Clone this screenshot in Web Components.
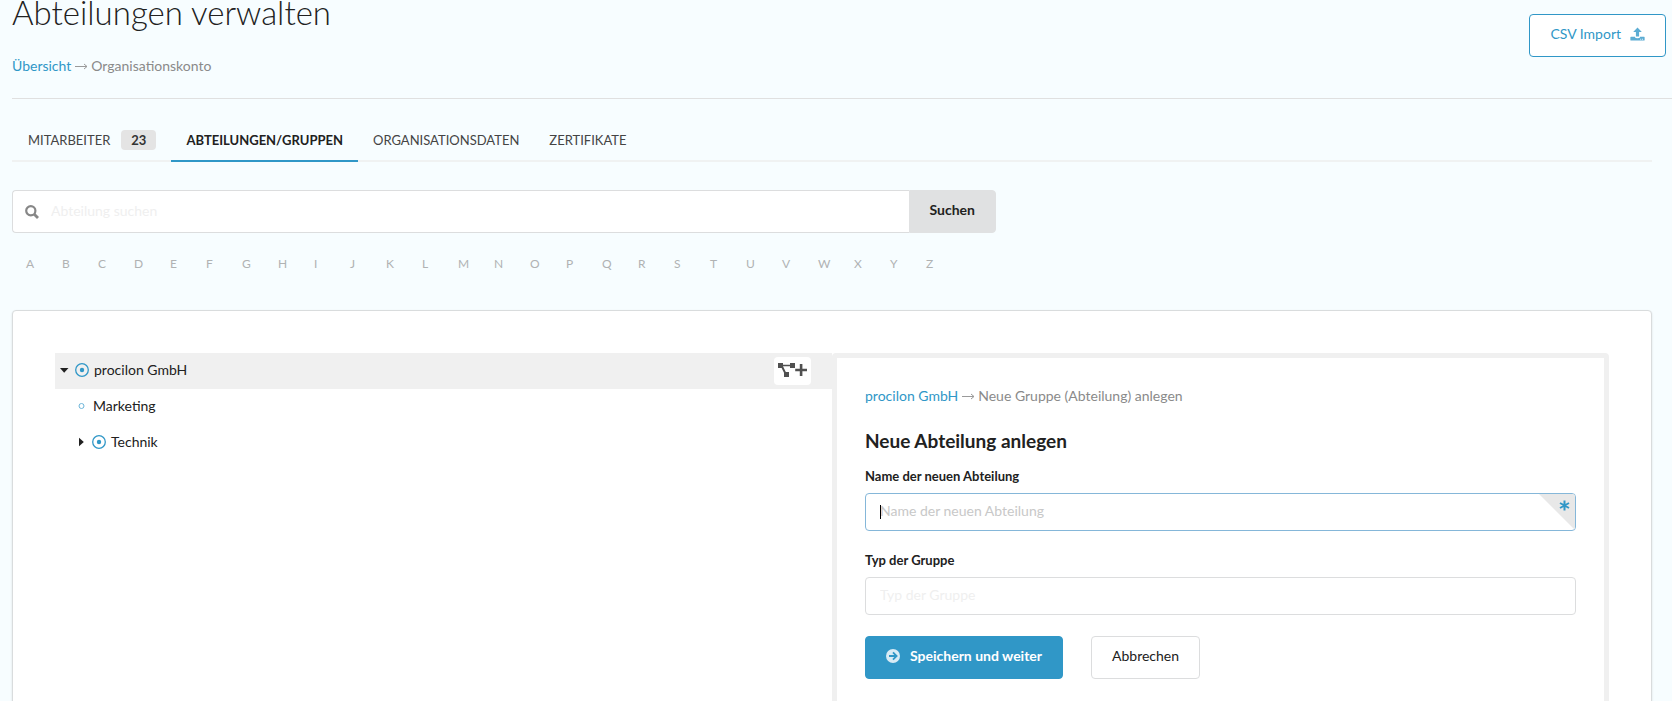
<!DOCTYPE html>
<html lang="de">
<head>
<meta charset="utf-8">
<title>Abteilungen verwalten</title>
<style>
  body {
    margin: 0;
    background: #f7fdff;
    font-family: Lato, "Liberation Sans", sans-serif;
    font-size: 14px;
    line-height: 20px;
    color: #212121;
    --accent: #3097c7;
    --line: #dcddde;
    --soft: #f0f0f0;
  }
</style>
</head>
<body>
<org-page></org-page>

<script>
const define = (name, html, setup) => {
  const template = document.createElement('template');
  template.innerHTML = '<style>*{box-sizing:border-box}a{color:var(--accent);text-decoration:none}button,input{font-family:inherit}</style>' + html;
  customElements.define(name, class extends HTMLElement {
    constructor() {
      super();
      this.attachShadow({ mode: 'open' }).append(template.content.cloneNode(true));
    }
    connectedCallback() { if (setup) setup(this, this.shadowRoot); }
  });
};

define('bread-crumb', `
  <style>
    :host { display: block; color: #8a8a8a; font-size: 14px; line-height: 20px; }
    nav { display: flex; gap: 3px; }
    svg { width: 14px; height: 20px; }
  </style>
  <nav aria-label="Pfad"><a href="#"><slot name="parent"></slot></a>
    <svg viewBox="0 0 14 20" fill="none" stroke="#9a9a9a" aria-hidden="true"><path d="M1 10.5h12M10 8l3 2.5-3 2.5"/></svg>
    <span><slot></slot></span></nav>`);

define('ui-button', `
  <style>
    :host { display: block; }
    button {
      display: flex; align-items: center; justify-content: center; gap: 9px;
      height: 43px; padding: 0 20px 3px; margin: 0;
      background: #fff; border: 1px solid var(--line); border-radius: 4px;
      color: #212121; font-size: 14px; line-height: 20px; white-space: nowrap;
    }
    :host([kind=outline]) button { border-color: var(--accent); color: var(--accent); }
    :host([kind=primary]) button { gap: 10px; background: var(--accent); border-color: var(--accent); color: #fff; font-weight: 700; }
    :host([kind=attached]) button { background: #e0e1e2; border-color: #e0e1e2; border-radius: 0 4px 4px 0; font-weight: 700; }
  </style>
  <button type="button"><slot name="before"></slot><slot></slot><slot name="after"></slot></button>`);

define('page-head', `
  <style>
    :host { display: block; margin-left: 12px; border-bottom: 1px solid #e0e0e0; }
    header { display: flex; justify-content: space-between; align-items: flex-start; padding: 0 6px 22px 0; }
    h1 { margin: 0 0 32px; font-size: 33px; line-height: 24px; font-weight: 300; }
    ui-button { margin-top: 14px; }
    svg { display: block; width: 15px; height: 15px; }
  </style>
  <header>
    <div>
      <h1>Abteilungen verwalten</h1>
      <bread-crumb><span slot="parent">Übersicht</span>Organisationskonto</bread-crumb>
    </div>
    <ui-button kind="outline">CSV Import
      <svg slot="after" viewBox="0 0 16 16" fill="#5cacd3" aria-hidden="true"><path d="M8 0.5l4.6 4.7H9.7v5H6.3v-5H3.4zM1 10.3h4.3v.6q.4 1 2.7 1t2.7-1v-.6H15q.6 0 .6.6v3q0 .6-.6.6H1q-.6 0-.6-.6v-3q0-.6.6-.6zM11 12.6v.9h.9v-.9zm2 0v.9h.9v-.9z" fill-rule="evenodd"/></svg>
    </ui-button>
  </header>`);

define('tab-bar', `
  <style>
    :host { display: block; border-bottom: 2px solid #f0f2f2; }
    nav { display: flex; margin-bottom: -2px; }
  </style>
  <nav><slot></slot></nav>`);

define('tab-item', `
  <style>
    :host { display: block; border-bottom: 2px solid transparent; }
    :host([active]) { border-color: var(--accent); font-weight: 700; }
    a { display: flex; align-items: center; gap: 11px; height: 40px; padding: 0 15px; color: #444; font-size: 13px; text-transform: uppercase; }
    :host([active]) a { color: #212121; }
    ::slotted(b) { padding: 0 10px; background: #e4e4e4; border-radius: 4px; color: #333; }
  </style>
  <a href="#"><slot></slot></a>`);

define('search-bar', `
  <style>
    :host { display: block; width: 60%; }
    form { display: flex; }
    label { flex: 1; display: flex; align-items: center; gap: 12px; height: 43px; padding: 0 12px; background: #fff; border: 1px solid var(--line); border-right: 0; border-radius: 4px 0 0 4px; }
    svg { width: 14px; height: 14px; }
    input { flex: 1; min-width: 0; padding: 0 0 2px; border: 0; outline: 0; background: none; font-size: 14px; }
    input::placeholder { color: #efefef; opacity: 1; }
  </style>
  <form>
    <label><svg viewBox="0 0 14 14" fill="none" stroke="#878787" aria-hidden="true"><circle cx="5.8" cy="5.8" r="4.6" stroke-width="2.2"/><path d="M9 9l4 4" stroke-width="2.8"/></svg>
    <input type="search" aria-label="Abteilung suchen" placeholder="Abteilung suchen"></label>
    <ui-button kind="attached">Suchen</ui-button>
  </form>`);

define('letter-index', `
  <style>
    :host { display: block; padding-left: 14px; }
    nav { display: flex; }
    a { width: 36px; color: #b0b2b3; font-size: 12px; line-height: 20px; }
  </style>
  <nav aria-label="Buchstaben"></nav>`, (host, root) => {
  root.querySelector('nav').innerHTML = [...'ABCDEFGHIJKLMNOPQRSTUVWXYZ'].map(c => `<a href="#${c}">${c}</a>`).join('');
});

define('tree-node', `
  <style>
    :host { display: block; }
    div { display: flex; align-items: center; gap: 5px; height: 36px; padding: 0 21px 3px 2px; }
    :host([level="1"]) div { padding-left: 19px; }
    :host([selected]) div { background: var(--soft); }
    svg { width: 14px; height: 14px; flex: none; }
    .mark { display: none; }
    .caret { width: 14px; margin-right: -1px; fill: #212121; }
    :host([state=open]) .open, :host([state=closed]) .closed, :host([state=leaf]) .leaf { display: block; }
    :host([state=leaf]) .ring { display: none; }
    .name { flex: 1; }
  </style>
  <div>
    <svg class="mark caret open" viewBox="0 0 14 14"><path d="M3 5h8.500L7.200 9.700z"/></svg>
    <svg class="mark caret closed" viewBox="0 0 14 14"><path d="M5 2.700l4.800 4.300L5 11.300z"/></svg>
    <svg class="mark leaf" viewBox="0 0 14 14" fill="none" stroke="#6cb5d9"><circle cx="7.500" cy="7" r="2.500"/></svg>
    <svg class="ring" viewBox="0 0 14 14" fill="none" stroke="#3097c7" stroke-width="1.3"><circle cx="7" cy="7" r="6.300"/><circle cx="7" cy="7" r="2.2" fill="#3097c7" stroke="none"/></svg>
    <span class="name"><slot></slot></span>
    <slot name="action"></slot>
  </div>`);

define('org-tree', `
  <style>
    :host { display: block; width: 50%; }
    button { width: 37px; height: 28px; margin: 2px 0 0; padding: 0 4px 2px; background: #fff; border: 0; border-radius: 4px; }
    svg { display: block; width: 29px; height: 14px; }
  </style>
  <tree-node state="open" selected>procilon GmbH
    <button slot="action" type="button" aria-label="Gruppe hinzufügen"><svg viewBox="0 0 29 14" fill="#505050"><path d="M0 0h5v1.8h7V0h5v5h-5V3.2H5L7.8 9H11v5H6V9.7L3.6 5H0z"/><path d="M21.8 1h2.6v4.7H29v2.6h-4.6V13h-2.6V8.3h-4.6V5.7h4.6z"/></svg></button>
  </tree-node>
  <tree-node state="leaf" level="1">Marketing</tree-node>
  <tree-node state="closed" level="1">Technik</tree-node>`);

define('form-field', `
  <style>
    :host { display: block; }
    label { display: block; margin-bottom: 8px; font-size: 13px; line-height: 18px; font-weight: 700; }
    .box { position: relative; display: flex; height: 38px; overflow: hidden; background: #fff; border: 1px solid var(--line); border-radius: 4px; }
    input { flex: 1; min-width: 0; padding: 0 14px 4px; border: 0; outline: 0; background: none; font-size: 14px; }
    input::placeholder { color: #efefef; opacity: 1; }
    i, svg { display: none; }
    :host([required]) .box { border-color: #85b7d9; }
    :host([required]) input::placeholder { color: #c8c8c8; }
    :host([required]) i { display: block; position: absolute; left: 14px; top: 11px; width: 1px; height: 14px; background: #000; }
    :host([required]) svg { display: block; position: absolute; right: 0; top: 0; width: 36px; height: 36px; }
  </style>
  <label for="field"></label>
  <div class="box"><input id="field" type="text"><i></i>
    <svg viewBox="0 0 36 36" aria-hidden="true"><path d="M0 0h36v36z" fill="#e8e8e8"/><path d="M25.500 6.500v10M21 9l9 5M21 14l9-5" stroke="#3097c7" stroke-width="2"/></svg>
  </div>`, (host, root) => {
  root.querySelector('label').textContent = host.getAttribute('label');
  const input = root.querySelector('input');
  input.placeholder = host.getAttribute('label');
});

define('group-editor', `
  <style>
    :host { display: block; width: 50%; padding: 28px 28px 40px; border: 5px solid var(--soft); border-radius: 4px; box-sizing: border-box; }
    h2 { margin: 23px 0 14px; font-size: 19px; line-height: 24px; font-weight: 700; }
    form-field + form-field { margin-top: 20px; }
    footer { display: flex; gap: 28px; margin-top: 21px; }
    svg { display: block; width: 14px; height: 14px; }
  </style>
  <bread-crumb><span slot="parent">procilon GmbH</span>Neue Gruppe (Abteilung) anlegen</bread-crumb>
  <h2>Neue Abteilung anlegen</h2>
  <form-field label="Name der neuen Abteilung" required></form-field>
  <form-field label="Typ der Gruppe"></form-field>
  <footer>
    <ui-button kind="primary"><svg slot="before" viewBox="0 0 14 14" aria-hidden="true"><circle cx="7" cy="7" r="7" fill="#d8ebf5"/><path d="M3 7h7.500M7 3.400L10.600 7 7 10.600" fill="none" stroke="#3097c7" stroke-width="1.800"/></svg>Speichern und weiter</ui-button>
    <ui-button>Abbrechen</ui-button>
  </footer>`);

define('org-page', `
  <style>
    :host { display: block; height: 100vh; overflow: hidden; }
    main { margin: 0 20px 0 12px; }
    tab-bar { padding: 21px 0 0 1px; }
    search-bar { margin-top: 28px; }
    letter-index { margin-top: 21px; }
    .card { display: flex; margin-top: 36px; padding: 42px; background: #fff; border: 1px solid #d9dcdd; border-radius: 4px; box-shadow: 0 1px 2px rgba(34,36,38,.15); }
  </style>
  <page-head></page-head>
  <main>
    <tab-bar>
      <tab-item>Mitarbeiter <b>23</b></tab-item>
      <tab-item active>Abteilungen/Gruppen</tab-item>
      <tab-item>Organisationsdaten</tab-item>
      <tab-item>Zertifikate</tab-item>
    </tab-bar>
    <search-bar></search-bar>
    <letter-index></letter-index>
    <section class="card"><org-tree></org-tree><group-editor></group-editor></section>
  </main>`);
</script>
</body>
</html>
